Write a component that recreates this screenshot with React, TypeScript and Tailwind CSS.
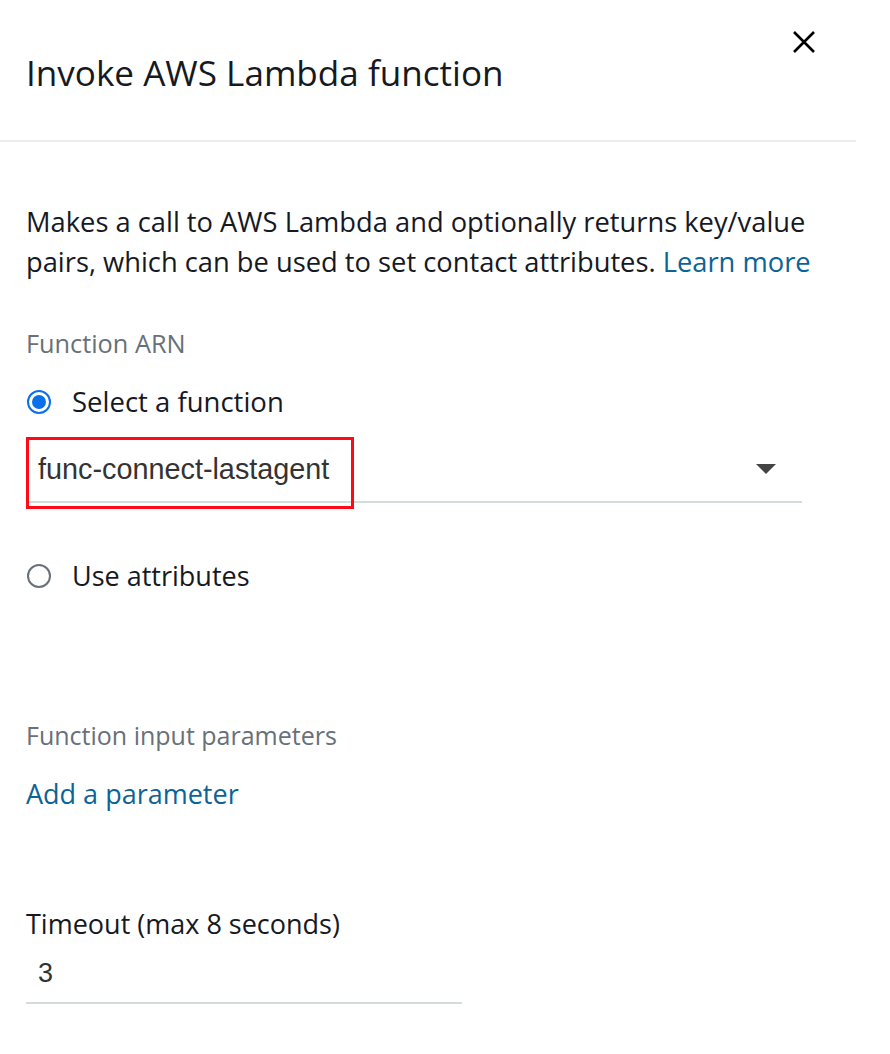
import React from "react";

const ember = { fontFamily: '"Open Sans", "Noto Sans", sans-serif' };
const arial = { fontFamily: '"Liberation Sans", Arial, sans-serif' };

function Radio({ checked, label, size }: { checked?: boolean; label: string; size: string }) {
  return (
    <div className="flex h-[40px] items-center">
      {checked ? (
        <span className="ml-px flex h-[24px] w-[24px] items-center justify-center rounded-full border-[2px] border-[#0a6fe8]">
          <span className="h-[14px] w-[14px] rounded-full bg-[#0a6fe8]" />
        </span>
      ) : (
        <span className="ml-px h-[24px] w-[24px] rounded-full border-[2px] border-[#687078]" />
      )}
      <span className={`ml-[21px] text-[#16191f] ${size}`}>{label}</span>
    </div>
  );
}

export default function App() {
  return (
    <div className="min-h-[1054px] w-[890px] bg-white" style={ember}>
      <div className="w-[856px]">
        <div className="flex h-[142px] items-start justify-between border-b-2 border-[#eaeded] pl-[26px] pr-[40px]">
          <h1 className="mt-[50px] text-[35.1px] leading-[44px] text-[#16191f]">Invoke AWS Lambda function</h1>
          <svg className="mt-[30px]" width="24" height="24" viewBox="0 0 24 24">
            <path d="M2 2 L22 22 M22 2 L2 22" stroke="#000" strokeWidth="2.6" fill="none" />
          </svg>
        </div>

        <div className="px-[26px]">
          <p className="mt-[60px] text-[27.3px] leading-[40px] text-[#16191f]">
            Makes a call to AWS Lambda and optionally returns key/value pairs, which can be used to set
            contact attributes. <span className="text-[#0b6398]">Learn more</span>
          </p>

          <div className="mt-[45px] text-[25.3px] leading-[32px] text-[#687078]">Function ARN</div>

          <div className="mt-[23px]">
            <Radio checked label="Select a function" size="text-[27.5px]" />
          </div>

          <div className="relative mt-[15px] flex h-[66px] w-[776px] items-center justify-between border-b-2 border-[#d5dbdb] pl-[12px] pr-[26px]">
            <span className="mt-[2px] text-[28.8px] text-[#333]" style={arial}>
              func-connect-lastagent
            </span>
            <svg width="20" height="11" viewBox="0 0 20 11">
              <path d="M0 0 H20 L10 10 Z" fill="#444" />
            </svg>
            <div className="absolute left-0 top-0 h-[72px] w-[328px] border-[3px] border-[#ff0a14]" />
          </div>

          <div className="mt-[53px]">
            <Radio label="Use attributes" size="text-[27px]" />
          </div>

          <div className="mt-[123px] text-[25px] leading-[32px] text-[#687078]">Function input parameters</div>
          <div className="mt-[27px] text-[27px] leading-[32px] text-[#0b6398]">Add a parameter</div>

          <div className="mt-[98px] text-[27px] leading-[32px] text-[#16191f]">Timeout (max 8 seconds)</div>
          <div className="flex h-[64px] w-[436px] items-center border-b-2 border-[#d5dbdb] pl-[12px]">
            <span className="mt-[4px] text-[27px] text-[#333]" style={arial}>
              3
            </span>
          </div>
        </div>
      </div>
    </div>
  );
}
